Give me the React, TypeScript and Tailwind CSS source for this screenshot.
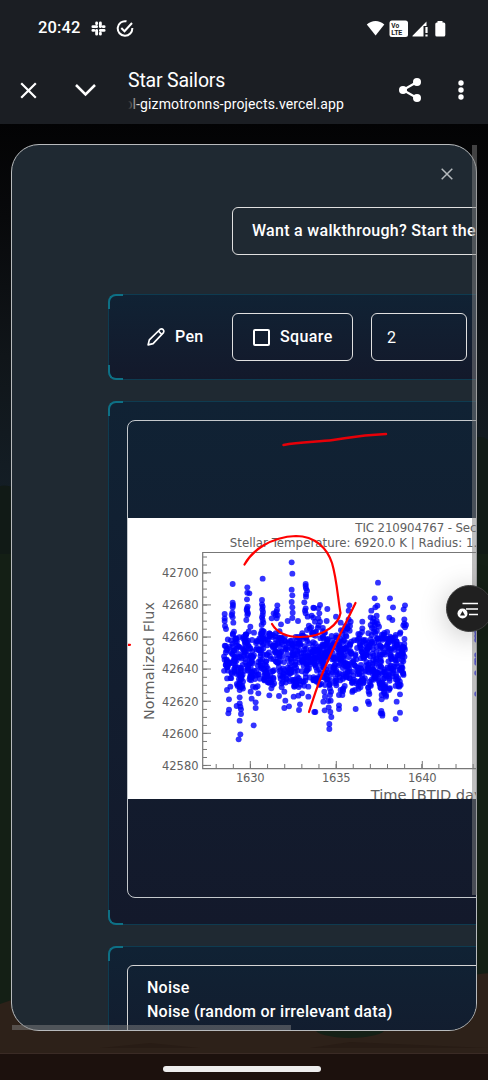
import React from 'react';

const roboto = "font-['Roboto','Liberation_Sans',sans-serif]";

function mulberry(seed: number) {
  let a = seed;
  return () => {
    a = (a + 0x6d2b79f5) | 0;
    let t = Math.imul(a ^ (a >>> 15), 1 | a);
    t = (t + Math.imul(t ^ (t >>> 7), 61 | t)) ^ t;
    return ((t ^ (t >>> 14)) >>> 0) / 4294967296;
  };
}

// Sparse points, in thirds of a pixel, from two chart regions.
const leftPoints = [
  [53,102],[53,158],[53,172],[52,188],[53,202],[55,218],[97,112],[97,128],[103,130],[96,148],[96,175],[97,185],[97,195],[94,210],
  [143,86],[141,150],[141,163],[142,178],[143,195],[143,210],[140,225],[187,166],[186,180],[182,195],[185,205],[176,190],[170,205],[198,223],
  [230,37],[232,71],[230,119],[232,136],[230,156],[232,172],[233,188],[232,204],[218,213],[249,213],[272,102],[273,115],[273,133],[273,140],
  [268,157],[272,175],[272,190],[278,200],[295,173],[290,197],[29,192],[29,205],[29,213],[30,228],[33,237],[57,245],[106,230],[117,248],[133,265],
  [36,420],[46,410],[42,448],[42,479],[40,490],[74,400],[74,412],[68,408],[82,408],[74,420],[74,442],[74,460],[65,468],[76,470],[78,478],[78,492],[74,512],
  [76,553],[71,568],[116,526],[122,474],[122,457],[110,446],[107,425],[114,410],[130,430],[163,436],[192,438],[211,452],[208,474],
  [222,469],[236,440],[252,480],[255,463],[261,430],[250,437],[280,440],[280,410],[298,486],[169,415],[200,412],[208,425],[240,405],[158,397],
  [98,170],[95,180],[99,190],[143,170],[144,186],[141,202],[145,218],[54,165],[50,195],[272,108],[276,122],[270,182],[184,186],[188,196],
];
const rightPoints = [
  [204,98],[194,145],[240,145],[249,172],[202,167],[196,172],[184,182],[182,202],[200,197],[188,215],[182,225],[195,225],[207,230],[200,213],
  [285,166],[281,178],[238,203],[247,210],[283,208],[283,220],[285,232],[271,247],[118,166],[116,182],[116,208],[122,215],[113,225],[157,215],
  [157,235],[145,252],[156,246],[30,165],[12,174],[25,175],[52,177],[28,190],[25,205],[10,203],[30,215],[15,215],[78,200],[92,218],[50,213],[16,486],[45,405],
  [43,425],[45,440],[40,455],[63,425],[60,435],[62,452],[55,453],[56,472],[44,481],[61,486],[64,501],[58,522],[58,537],[87,435],[97,435],
  [87,466],[87,477],[137,477],[135,420],[174,455],[177,462],[178,432],[176,425],[215,435],[228,435],[215,448],[222,425],[214,483],[217,491],[217,497],[212,490],
  [270,433],[260,455],[270,488],[257,507],[100,415],[265,408],[272,405],[228,440],[190,205],[194,218],[186,234],[203,222],[280,226],[288,225],[112,236],[120,228],
];
// Dense band: x, top, bottom.
const band = [
  [225,638,683],[231,638,686],[233,633,675],[238,636,686],[241,648,690],[245,634,678],[249,629,680],[253,636,690],
  [258,640,688],[262,630,670],[266,634,683],[272,631,687],[277,630,672],[283,634,690],[290,638,684],[297,636,688],[303,632,687],
  [308,624,685],[315,628,682],[320,624,686],[326,632,680],[331,628,692],[337,632,686],[342,626,692],[348,626,681],[353,640,694],
  [358,634,690],[363,636,686],[370,630,692],[376,628,680],[381,632,694],[387,630,695],[393,634,678],[398,632,689],[405,635,676],
];

function scatter() {
  const r = mulberry(4267);
  const pts = [
    ...leftPoints.map(([x, y]) => [215 + x / 3, 550 + y / 3]),
    ...rightPoints.map(([x, y]) => [310 + x / 3, 550 + y / 3]),
  ];
  for (let i = 0; i < 960; i++) {
    const x = 224 + r() * 181;
    let k = 0;
    while (k < band.length - 2 && band[k + 1][0] < x) k++;
    const n = x - band[k][0] < band[k + 1][0] - x ? band[k] : band[k + 1];
    pts.push([x, n[1] + (n[2] - n[1]) * r()]);
  }
  return pts;
}
const points = scatter();

function Chart() {
  const yt: number[] = [];
  for (let y = 557; y < 768; y += 8.02) yt.push(y);
  const xt: number[] = [];
  for (let x = 216.2; x < 478; x += 17.13) xt.push(x);
  return (
    <svg className="block h-[281px] w-[400px] shrink-0 bg-white" viewBox="128 518 400 281">
      <g fill="none" stroke="#777" strokeWidth="1">
        <path d="M530 552.5H202.7V768.7H530" strokeWidth="1.2" />
        {yt.map((y) => <path key={y} d={`M203 ${y}h4`} />)}
        {xt.map((x) => <path key={x} d={`M${x} 768v-4`} />)}
        {[572.8, 604.9, 637, 669, 701.2, 733.3, 765.4].map((y) => <path key={y} d={`M203 ${y}h8`} />)}
        {[250.3, 336.3, 422.3].map((x) => <path key={x} d={`M${x} 768v-7`} />)}
      </g>
      <g fill="#606060" fontFamily="DejaVu Sans, sans-serif" fontSize="11.5">
        {[42700, 42680, 42660, 42640, 42620, 42600, 42580].map((v, i) => (
          <text key={v} x="162" y={577.1 + i * 32.1} textLength="36.5">{v}</text>
        ))}
        {[1630, 1635, 1640].map((v, i) => (
          <text key={v} x={236 + i * 86} y="781.5" textLength="28.6">{v}</text>
        ))}
        <text x="355.3" y="531.5" fontSize="11.8" textLength="156">TIC 210904767 - Sector 20</text>
        <text x="229.8" y="546.5" fontSize="11.8" textLength="285">Stellar Temperature: 6920.0 K | Radius: 1.45 R☉</text>
        <text x="370.7" y="799.5" fontSize="14.6">Time [BTJD days]</text>
        <text transform="translate(154 720) rotate(-90)" fontSize="14.3" textLength="118">Normalized Flux</text>
      </g>
      <g fill="#0000ff" fillOpacity="0.8">
        {points.map(([x, y], i) => <circle key={i} cx={x} cy={y} r="2.95" />)}
        {[632, 636, 640, 655, 660, 663, 673, 694].map((y) => <circle key={y} cx="477" cy={y} r="2.8" />)}
      </g>
    </svg>
  );
}

function Corners({ bottom = true }: { bottom?: boolean }) {
  return (
    <>
      <span className="absolute -top-px -left-px size-[15px] rounded-tl-lg border-t-[2.5px] border-l-[2.5px] border-[#0e7085]" />
      {bottom && <span className="absolute -bottom-px -left-px size-[15px] rounded-bl-lg border-b-[2.5px] border-l-[2.5px] border-[#0e7085]" />}
    </>
  );
}

const panel = 'relative ml-24 w-[620px] shrink-0 rounded-lg border border-[#0e3b50] bg-linear-to-b from-[#102234] to-[#13192b]';
const outlined = 'flex h-12 shrink-0 items-center rounded-md border-[1.3px] border-[#e0e0e0]';

function StatusBar() {
  return (
    <div className="flex h-14 items-center pt-px pr-[42px] pl-[38px]">
      <span className="w-[53px] text-[16.5px] font-medium tracking-[0.1px]">20:42</span>
      <svg className="size-[15px]" viewBox="0 0 24 24" fill="none" stroke="currentColor" strokeWidth="4.6" strokeLinecap="round">
        <path d="M9 3v1.500M15 3v6M3 9h6M19.500 9H21M9 15v6M3 15h1.500M15 15h6M15 19.500V21" />
      </svg>
      <svg className="ml-[10px] size-[18px]" viewBox="0 0 18 18" fill="none" stroke="currentColor" strokeWidth="2">
        <path d="M10.5 1.3A7.3 7.3 0 1 0 16.3 8" />
        <path d="M5.3 8l3.2 3.2L16 3" />
      </svg>
      <svg className="ml-auto h-[18px] w-[80px]" viewBox="0 0 80 18" fill="currentColor">
        <path d="M.8 4.500C5.8-.2 13.300-.2 18.300 4.500L9.600 15.500z" />
        <rect x="23.500" y=".5" width="18.500" height="16.500" rx="2.500" />
        <path d="M46.500 16.500V15.800L60.500 1.500V6H57.500V16.500z" />
        <path d="M59.400 7h2.200v6h-2.200zM59.400 14.500h2.200v2h-2.200z" />
        <path d="M71.500 1h5v1.600h1.300q1.500 0 1.500 1.500V15q0 1.500-1.500 1.500h-7q-1.500 0-1.500-1.500V4.100q0-1.500 1.500-1.500h.7z" />
        <g fill="#1b1e23" fontFamily="Roboto, sans-serif" fontSize="7" fontWeight="700">
          <text x="25.300" y="7.500" fontSize="6.600">Vo</text>
          <text x="25.300" y="14.600" textLength="11">LTE</text>
        </g>
      </svg>
    </div>
  );
}

function BrowserBar() {
  return (
    <div className="flex h-[68px] items-center">
      <svg className="ml-5 size-[17px]" viewBox="0 0 17 17" fill="none" stroke="currentColor" strokeWidth="2.2">
        <path d="M1.200 1.200l14.600 14.600M15.800 1.200L1.200 15.800" />
      </svg>
      <svg className="ml-[37px] h-[14px] w-[23px]" viewBox="0 0 23 14" fill="none" stroke="currentColor" strokeWidth="2.500">
        <path d="M2 2l9.500 9.500L21 2" />
      </svg>
      <div className="ml-[31px] w-[260px] pt-[3px]">
        <div className="pt-px text-[19.5px] leading-[23px] tracking-[-0.2px]">Star Sailors</div>
        <div className="relative flex h-6 w-[216px] items-center justify-end overflow-hidden text-sm leading-6 whitespace-nowrap">
          <span className="tracking-[0.12px]">ol-gizmotronns-projects.vercel.app</span>
          <span className="absolute inset-y-0 left-0 w-3 bg-linear-to-r from-[#1b1e23] to-transparent" />
        </div>
      </div>
      <svg className="ml-[10px] h-[24px] w-[24px]" viewBox="0 0 24 24" fill="currentColor">
        <path d="M19 4L5 12l14 8" fill="none" stroke="currentColor" strokeWidth="2.200" />
        <circle cx="19" cy="4" r="4" /><circle cx="5" cy="12" r="4" /><circle cx="19" cy="20" r="4" />
      </svg>
      <svg className="ml-[36px] h-[20px] w-[6px]" viewBox="0 0 6 20" fill="currentColor">
        <circle cx="3" cy="3" r="2.700" /><circle cx="3" cy="10" r="2.700" /><circle cx="3" cy="17" r="2.700" />
      </svg>
    </div>
  );
}

function Landscape() {
  return (
    <svg className="absolute inset-0 size-full" viewBox="0 0 488 929" preserveAspectRatio="none">
      <defs>
        <linearGradient id="sky" x1="0" y1="0" x2="0" y2="1">
          <stop offset="0" stopColor="#030304" /><stop offset=".1" stopColor="#08090b" />
          <stop offset=".25" stopColor="#101519" /><stop offset=".45" stopColor="#15212a" />
        </linearGradient>
      </defs>
      <rect width="488" height="929" fill="url(#sky)" />
      <path d="M0 362Q20 358 40 390L450 335Q475 305 488 316V929H0z" fill="#111a16" />
      <path d="M0 430L488 430V929H0z" fill="#141f15" />
      <path d="M0 880Q80 850 180 885T400 875T488 864V929H0z" fill="#2d2119" />
      <path d="M315 905a35 9 0 0 0 70 0z" fill="#142016" />
      <path d="M100 924l50-5 50 5zM310 924l40-6 138 6z" fill="#281c15" />
    </svg>
  );
}

export default function App() {
  return (
    <div className={`flex h-[1080px] w-[488px] flex-col overflow-hidden bg-[#1b1e23] text-white ${roboto}`}>
      <header className="h-[124px] shrink-0">
        <StatusBar />
        <BrowserBar />
      </header>
      <main className="relative h-[929px] shrink-0 overflow-hidden pt-[20px] pl-[11px]">
        <Landscape />
        <section className="relative flex h-[887px] w-[466px] flex-col overflow-hidden rounded-[28px] border-[1.5px] border-[#b8bbbd] bg-[#1f2932]">
          <div className="flex h-[62px] shrink-0 justify-end pt-[23px] pr-[23px]">
            <svg className="size-3" viewBox="0 0 12 12" fill="none" stroke="#b5babd" strokeWidth="1.500">
              <path d="M.7.7l10.600 10.600M11.300.7L.7 11.300" />
            </svg>
          </div>
          <div className={`${outlined} ml-[220px] w-[350px] px-[19px] font-medium whitespace-nowrap`}>
            <span className="text-base tracking-[0.29px]">Want a walkthrough? Start the tutorial</span>
          </div>
          <div className={`${panel} mt-[39px] flex h-[86px] items-center`}>
            <Corners />
            <svg className="ml-[37px] size-[20px]" viewBox="0 0 24 24" fill="none" stroke="currentColor" strokeWidth="2" strokeLinejoin="round">
              <path d="M2.500 21.500l1.500-6L17 2.700a2.900 2.900 0 0 1 4 4L8.500 20z" /><path d="M15 5l4 4" />
            </svg>
            <span className="ml-[9px] w-[57px] text-base font-medium tracking-[0.3px]">Pen</span>
            <button className={`${outlined} w-[121px] pl-[20px] font-medium`}>
              <span className="size-[17px] rounded-[2px] border-2 border-white" />
              <span className="ml-[10px] text-base tracking-[0.4px]">Square</span>
            </button>
            <div className={`${outlined} ml-[18px] w-[96px] pl-[15px] text-base`}>
              <span className="pt-px">2</span>
            </div>
          </div>
          <div className={`${panel} mt-[21px] h-[524px] pt-[18px] pl-[18px]`}>
            <Corners />
            <div className="relative flex h-[478px] w-[580px] flex-col overflow-hidden rounded-lg border-[1.3px] border-[#c4c8cc] pt-[97px]">
              <Chart />
              <svg className="absolute top-0 left-0 h-[477px] w-[360px]" viewBox="128 421 360 477" fill="none" stroke="#f00" strokeWidth="2.200" strokeLinecap="round" strokeLinejoin="round">
                <path d="M283.500 445C300 442 318 442 333 440S357 435 386 434" stroke="#e60008" strokeWidth="2.500" />
                <path d="M244.500 564.500C252 551 270 537 296 536C315 536 327 548 332 563C337 580 338 600 340.500 613C339 622 327 637 300 637C285 637 276 631 272 624" />
                <path d="M355.500 603C349 617 337 639 327 663C318 682 313 700 309 712" />
                <path d="M128 644.800h2" />
              </svg>
            </div>
          </div>
          <div className={`${panel} mt-[21px] h-[160px] pt-[18px] pl-[18px]`}>
            <Corners bottom={false} />
            <div className="h-[130px] w-[580px] rounded-md border-[1.3px] border-[#d5d5d5] px-[19px] pt-[10px] text-base leading-6 font-medium tracking-[0.27px]">
              <div>Noise</div>
              <div>Noise (random or irrelevant data)</div>
            </div>
          </div>
        </section>
        <span className="absolute top-[21px] left-[472px] h-[750px] w-[5px] bg-[#808080]/50" />
        <span className="absolute top-[901px] left-[12px] h-[5px] w-[279px] bg-[#808080]/50" />
        <button className="absolute top-[461px] left-[446px] flex size-[47px] rounded-full border border-[#3c3c3c] bg-[#202020] shadow-[0_4px_28px_rgba(0,0,0,0.22)]">
          <svg className="size-[45px] shrink-0" viewBox="447 586 45 45" fill="none" stroke="#fff" strokeWidth="1.700">
            <path d="M462.500 603.500H478M466 609H478M469 614.500H478" />
            <circle cx="462.500" cy="613.500" r="5" fill="#fff" stroke="none" />
            <path d="M460 615.500l2.500-4.500 2.500 4.500z" fill="#202020" stroke="none" />
          </svg>
        </button>
      </main>
      <footer className="flex grow items-start justify-center border-t border-[#3a2b25] bg-[#1c110d] pt-[12px]">
        <span className="mr-[4px] h-[5.500px] w-[158px] rounded-full bg-[#ededed]" />
      </footer>
    </div>
  );
}
